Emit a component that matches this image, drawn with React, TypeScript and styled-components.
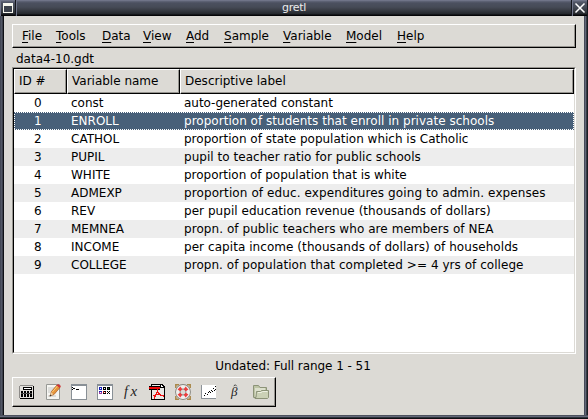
import React from "react";
import styled, { createGlobalStyle, css } from "styled-components";

const GlobalStyle = createGlobalStyle`
  * { box-sizing: border-box; }
  body { margin: 0; overflow: hidden; }
`;

const raised = css`
  border: 1px solid;
  border-color: #fff #000 #000 #fff;
  box-shadow: inset -1px -1px 0 #96948f;
`;

const Window = styled.div`
  width: 588px;
  height: 419px;
  display: grid;
  grid-template: 16px 399px 4px / 4px 580px 4px;
  background: #22252d;
  color: #000;
  font: 12px/18px "DejaVu Sans", sans-serif;
  white-space: pre;
`;

const TitleBar = styled.header`
  grid-column: 1 / -1;
  display: grid;
  grid-template-columns: 16px 1fr 16px;
  background: linear-gradient(#7d8196 0, #62677a 1px, #4b505f 3px, #464b57 7px, #34383f 11px, #24272c 14px, #050507 15px);
`;

const Title = styled.div`
  text-align: center;
  color: #ececec;
  font-size: 11px;
  line-height: 16px;
  letter-spacing: -0.3px;
  border-left: 1px solid #70758a;
  border-right: 1px solid #15171d;
`;

const TitleButton = styled.div`
  height: 16px;
  border-left: 1px solid #70758a;
  border-right: 1px solid #15171d;
  svg { display: block; margin-left: -1px; }
`;

const FrameSide = styled.div`
  background: linear-gradient(90deg, #444956 0 1px, #525766 1px 2px, #3d414b 2px 3px, #0f1116 3px);
`;

const FrameRight = styled(FrameSide)`
  background: linear-gradient(90deg, #454957 0 1px, #626779 1px 2px, #383c45 2px 3px, #1b1e24 3px);
`;

const FrameBottom = styled.div`
  grid-column: 1 / -1;
  background: linear-gradient(#4d515e 0 1px, #666b7b 1px 2px, #2d313a 2px 3px, #0c0e13 3px);
`;

const Client = styled.main`
  background: #dcdad5;
  padding: 8px;
  display: flex;
  flex-direction: column;
`;

const MenuBar = styled.nav`
  ${raised}
  height: 24px;
  display: flex;
  padding: 2px 0 0 9px;
  gap: 14px;
`;

const MenuItem = styled.div<{ $width: number }>`
  width: ${(p) => p.$width}px;
  line-height: 18px;
  &::first-letter { text-decoration: underline; text-decoration-thickness: 1px; text-underline-offset: 2px; }
`;

const FileName = styled.div`
  height: 19px;
  padding: 2px 0 0 4px;
`;

const ListFrame = styled.section`
  height: 287px;
  border: 1px solid;
  border-color: #96948f #fff #fff #96948f;
  display: flex;
`;

const List = styled.div`
  flex: 1;
  border: 1px solid;
  border-color: #000 #dcdad5 #dcdad5 #000;
  background: #fff;
`;

const columns = css`
  display: grid;
  grid-template-columns: 53px 113px 394px;
`;

const ListHeader = styled.div`
  ${columns}
  height: 25px;
`;

const HeaderCell = styled.div`
  ${raised}
  background: #dcdad5;
  padding: 2px 0 0 4px;
`;

const Row = styled.div<{ $selected: boolean; $shaded: boolean }>`
  ${columns}
  position: relative;
  height: 18px;
  color: ${(p) => (p.$selected ? "#fff" : "#000")};
  background: ${(p) => (p.$selected ? "#486079" : p.$shaded ? "#ededed" : "#fff")};
  ${(p) =>
    p.$selected &&
    css`
      &::after {
        content: "";
        position: absolute;
        inset: 0;
        background:
          repeating-linear-gradient(90deg, #486079 0 1px, #fff 1px 2px) top / 100% 1px no-repeat,
          repeating-linear-gradient(90deg, #fff 0 1px, #486079 1px 2px) bottom / 100% 1px no-repeat,
          repeating-linear-gradient(#fff 0 1px, #486079 1px 2px) left / 1px 100% no-repeat,
          repeating-linear-gradient(#fff 0 1px, #486079 1px 2px) right / 1px 100% no-repeat;
      }
    `}
`;

const IdCell = styled.div`
  padding-left: 20px;
`;

const Cell = styled.div<{ $tracking?: number }>`
  padding-left: 4px;
  letter-spacing: ${(p) => p.$tracking ?? 0}px;
`;

const Status = styled.footer`
  height: 23px;
  padding: 3px 2px 0 0;
  text-align: center;
  letter-spacing: -0.05px;
`;

const Toolbar = styled.div`
  ${raised}
  width: 264px;
  height: 30px;
  display: flex;
  align-items: center;
  gap: 10px;
  padding-left: 6px;
  svg { display: block; width: 16px; height: 16px; flex: none; }
`;

const Pixels = ({ d, fill = "#000" }: { d: [number, number, number, number][]; fill?: string }) => (
  <path fill={fill} d={d.map(([x, y, w, h]) => `M${x} ${y}h${w}v${h}h-${w}z`).join("")} />
);

const Icon = ({ children }: { children: React.ReactNode }) => (
  <svg viewBox="0 0 16 16" shapeRendering="crispEdges">{children}</svg>
);

const CalculatorIcon = () => (
  <Icon>
    <path fill="#8d8b88" d="M1 1h13v1h1v13H1v-1H0V2h1z" />
    <path fill="#e2e0dc" d="M1 2h13v12H1z" />
    <Pixels d={[[4, 3, 9, 1], [4, 3, 1, 3], [12, 3, 1, 3], [4, 5, 9, 1], [14, 2, 1, 13], [1, 14, 14, 1]]} />
    <Pixels fill="#fff" d={[[5, 4, 7, 1]]} />
    <Pixels d={[2, 5, 8, 11].flatMap((x) => [7, 10].map((y) => [x, y, 2, 3] as [number, number, number, number]))} />
    <Pixels fill="#454545" d={[[2, 9, 11, 1]]} />
  </Icon>
);

const EditIcon = () => (
  <svg viewBox="0 0 16 16">
    <path d="M1.5.5h13v15h-13z" fill="#f5f5f1" stroke="#979995" />
    <path d="M3 4h7M3 6h6M3 8h4M3 12h8" stroke="#c6c7c4" />
    <path d="M5 12l1.5-4.5L12 1l3 2.5-6 7z" fill="#e6953a" stroke="#a75a20" strokeWidth=".7" />
    <path d="M7.2 8.2L12.5 2" stroke="#ffd078" />
    <path d="M11.5 1.6L13 0l3 2-1.2 2z" fill="#cf3537" />
    <path d="M5 12l1.2-3.8 2.2 2z" fill="#ebcda0" />
    <path d="M4.5 12.5l.8-2 1.3 1.2z" fill="#333" />
  </svg>
);

const TerminalIcon = ({ children }: { children: React.ReactNode }) => (
  <Icon>
    <path fill="#899096" d="M0 0h16v16H0z" />
    <path fill="#fff" d="M1 2h14v13H1z" />
    {children}
  </Icon>
);

const ConsoleIcon = () => (
  <TerminalIcon>
    <Pixels d={[[1, 3, 1, 1], [2, 4, 2, 1], [1, 5, 1, 1], [5, 5, 3, 1]]} />
  </TerminalIcon>
);

const ring = (x: number, y: number): [number, number, number, number][] => [
  [x, y, 3, 1], [x, y + 2, 3, 1], [x, y + 1, 1, 1], [x + 2, y + 1, 1, 1],
];

const SessionIcon = () => (
  <TerminalIcon>
    <Pixels fill="#1720b8" d={[...ring(2, 3), [2, 7, 3, 1]]} />
    <Pixels d={[...ring(6, 3), ...ring(10, 3)]} />
    <Pixels fill="#137b24" d={[[11, 4, 1, 1]]} />
    <Pixels fill="#9e3da5" d={[[2, 8, 1, 1], [4, 8, 1, 1], [2, 9, 3, 1]]} />
    <Pixels fill="#b71818" d={[[6, 7, 1, 2], [8, 8, 1, 1]]} />
    <Pixels d={[[7, 7, 2, 1], [6, 9, 2, 1], [8, 9, 1, 1], [10, 7, 1, 1], [12, 7, 1, 1], [11, 8, 1, 1], [10, 9, 1, 1], [12, 9, 1, 1]]} />
  </TerminalIcon>
);

const FunctionIcon = () => (
  <svg viewBox="0 0 16 16">
    <text x="1" y="12" fontFamily="Liberation Serif" fontStyle="italic" fontSize="14" fill="#222">f</text>
    <text x="7.5" y="12" fontFamily="Liberation Serif" fontStyle="italic" fontSize="15" fill="#222">x</text>
  </svg>
);

const PdfIcon = () => (
  <Icon>
    <path fill="#000" d="M2 0h11l3 3v13H2z" />
    <path fill="#e8e7e4" d="M3 1h8v3h4v11H3z" />
    <path fill="#fff" d="M12 1h1v1h1v1h-2z" />
    <Pixels fill="#000" d={[[0, 2, 11, 4]]} />
    <Pixels fill="#ee0808" d={[[0, 3, 11, 2]]} />
    <path d="M8.5 5v3L5 14.5M8.5 8L11 11l4 1M4 12l4-1.5 4 .5" stroke="#ee1111" strokeWidth="1.3" fill="none" />
  </Icon>
);

const HelpIcon = () => (
  <svg viewBox="0 0 16 16">
    <path d="M.8 4V.8H4M12 .8h3.2V4M15.2 12v3.2H12M4 15.2H.8V12" fill="none" stroke="#a88748" strokeWidth="1.5" />
    <circle cx="8" cy="8" r="5.2" fill="none" stroke="#85857f" strokeWidth="5.4" />
    <circle cx="8" cy="8" r="5.2" fill="none" stroke="#f1f0ee" strokeWidth="3.6" />
    <path d="M2.6 5.4L5.4 2.6 7.2 5.2 5.2 7.2zM13.4 5.4L10.6 2.6 8.8 5.2l2 2zM2.6 10.6l2.8 2.8 1.8-2.6-2-2zM13.4 10.6l-2.8 2.8-1.8-2.6 2-2z" fill="#ed3c3c" />
  </svg>
);

const PlotIcon = () => (
  <Icon>
    <path fill="#fff" d="M0 1h15v14H0z" />
    <path fill="#8c9298" d="M0 1h1v14H0zM0 14h15v1H0z" />
    <Pixels d={[[3, 11, 1, 1], [4, 9, 1, 1], [6, 10, 1, 1], [7, 8, 1, 1], [8, 7, 1, 1], [9, 8, 1, 1], [10, 6, 1, 1], [11, 7, 1, 1], [12, 4, 1, 1], [13, 6, 1, 1], [14, 2, 1, 1], [14, 5, 1, 1]]} />
  </Icon>
);

const BetaIcon = () => (
  <svg viewBox="0 0 16 16">
    <text x="4" y="12" fontFamily="Liberation Serif" fontStyle="italic" fontSize="13" fill="#222">β</text>
    <path d="M6.7 2.2L8.2 .7l1.5 1.5" stroke="#333" strokeWidth=".9" fill="none" />
  </svg>
);

const FolderIcon = () => (
  <svg viewBox="0 0 16 16">
    <path d="M.5 13.5v-12h5l1.5 2h6.5v4" fill="#bdc4a5" stroke="#8c9378" />
    <path d="M2 12V4h10v3" fill="#dce0cd" />
    <path d="M3.5 7.5h4l1-1h7v7l-1 1H2l-1-1h2z" fill="#cbd1b6" stroke="#8b9277" />
    <path d="M5 8.5h3.5l1-1h5" fill="none" stroke="#edf0e2" />
  </svg>
);

const menus: [string, number][] = [
  ["File", 20], ["Tools", 32], ["Data", 27], ["View", 29], ["Add", 24],
  ["Sample", 45], ["Variable", 49], ["Model", 37], ["Help", 28],
];

const variables: [string, string, number][] = [
  ["const", "auto-generated constant", -0.03],
  ["ENROLL", "proportion of students that enroll in private schools", 0.025],
  ["CATHOL", "proportion of state population which is Catholic", 0],
  ["PUPIL", "pupil to teacher ratio for public schools", 0.035],
  ["WHITE", "proportion of population that is white", -0.03],
  ["ADMEXP", "proportion of educ. expenditures going to admin. expenses", 0.1],
  ["REV", "per pupil education revenue (thousands of dollars)", 0.045],
  ["MEMNEA", "propn. of public teachers who are members of NEA", 0.06],
  ["INCOME", "per capita income (thousands of dollars) of households", 0.06],
  ["COLLEGE", "propn. of population that completed >= 4 yrs of college", 0.045],
];

export default function App() {
  return (
    <>
      <GlobalStyle />
      <Window>
        <TitleBar>
          <TitleButton>
            <svg width="16" height="16" shapeRendering="crispEdges">
              <path d="M3 3h10v10H3z" fill="#f7f7ee" />
              <path d="M4 6h8v6H4z" fill="#3c414b" />
            </svg>
          </TitleButton>
          <Title>gretl</Title>
          <TitleButton>
            <svg width="16" height="16">
              <path d="M3.5 3.5l9 9m0-9l-9 9" stroke="#fff" strokeWidth="1.5" />
            </svg>
          </TitleButton>
        </TitleBar>
        <FrameSide />
        <Client>
          <MenuBar>
            {menus.map(([name, width]) => (
              <MenuItem key={name} $width={width}>{name}</MenuItem>
            ))}
          </MenuBar>
          <FileName>data4-10.gdt</FileName>
          <ListFrame>
            <List>
              <ListHeader>
                <HeaderCell>ID #</HeaderCell>
                <HeaderCell>Variable name</HeaderCell>
                <HeaderCell>Descriptive label</HeaderCell>
              </ListHeader>
              {variables.map(([name, label, tracking], id) => (
                <Row key={name} $selected={id === 1} $shaded={id % 2 === 1}>
                  <IdCell>{id}</IdCell>
                  <Cell>{name}</Cell>
                  <Cell $tracking={tracking}>{label}</Cell>
                </Row>
              ))}
            </List>
          </ListFrame>
          <Status>Undated: Full range 1 - 51</Status>
          <Toolbar>
            <CalculatorIcon />
            <EditIcon />
            <ConsoleIcon />
            <SessionIcon />
            <FunctionIcon />
            <PdfIcon />
            <HelpIcon />
            <PlotIcon />
            <BetaIcon />
            <FolderIcon />
          </Toolbar>
        </Client>
        <FrameRight />
        <FrameBottom />
      </Window>
    </>
  );
}
